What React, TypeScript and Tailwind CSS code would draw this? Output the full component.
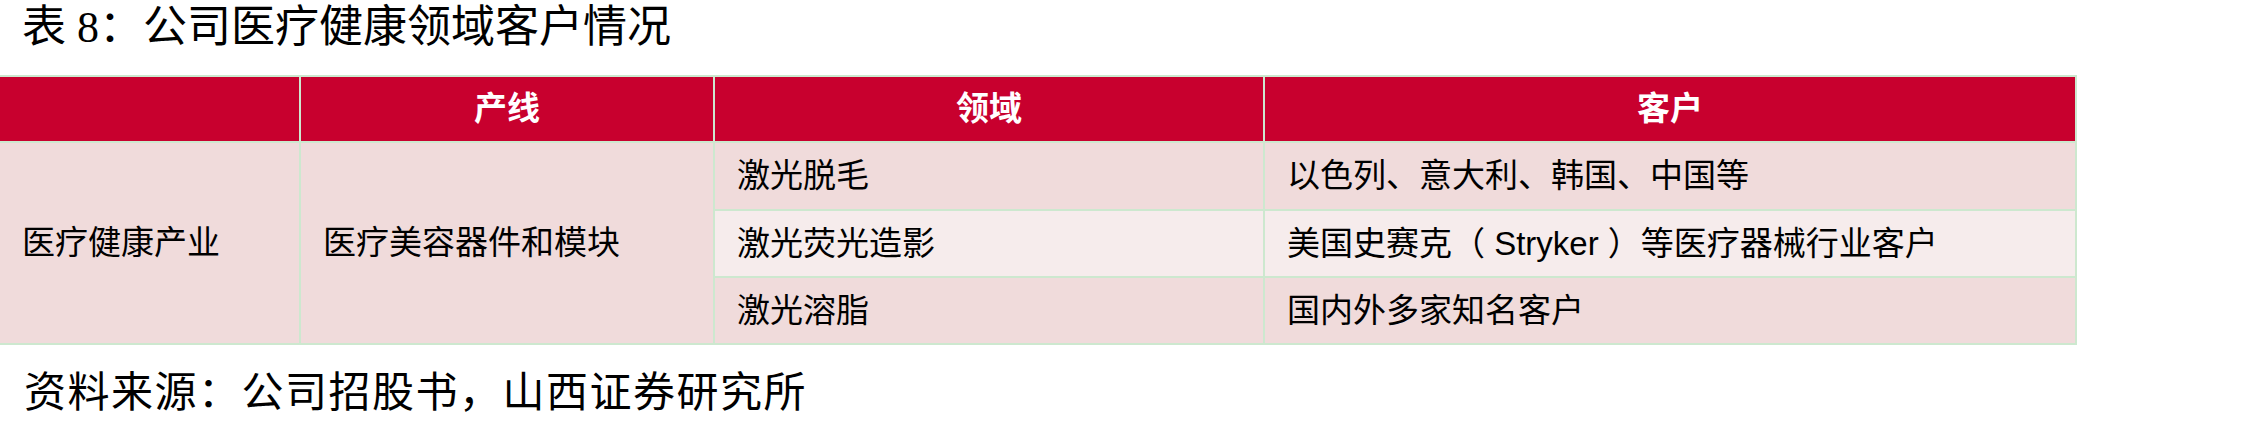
const sans = "font-['Liberation_Sans','Noto_Sans_CJK_SC',sans-serif]"

const rows = [
  { field: '激光脱毛', client: '以色列、意大利、韩国、中国等', light: false },
  { field: '激光荧光造影', client: '美国史赛克（ Stryker ）等医疗器械行业客户', light: true },
  { field: '激光溶脂', client: '国内外多家知名客户', light: false },
]

export default function App() {
  return (
    <div className="h-[430px] w-[2255px] bg-white text-black">
      <div className="flex h-[56px] items-center pl-[22px] font-['Liberation_Serif','Noto_Sans_CJK_SC',serif] text-[44px] leading-none">
        表 8：公司医疗健康领域客户情况
      </div>

      <div className="h-[19px]" />

      {/* table */}
      <div
        className={`grid w-[2077px] grid-cols-[299px_412px_548px_810px] grid-rows-[64px_66px_65px_65px] gap-[2px] bg-[#cde8cf] pt-[2px] pr-[2px] pb-[2px] ${sans}`}
      >
        <div className="bg-[#c8002e]" />
        <div className="flex items-center justify-center bg-[#c8002e] text-[33px] font-bold text-white">
          产线
        </div>
        <div className="flex items-center justify-center bg-[#c8002e] text-[33px] font-bold text-white">
          领域
        </div>
        <div className="flex items-center justify-center bg-[#c8002e] text-[33px] font-bold text-white">
          客户
        </div>

        <div className="row-span-3 flex items-center bg-[#f0dbdb] pl-[22px] text-[33px]">
          医疗健康产业
        </div>
        <div className="row-span-3 flex items-center bg-[#f0dbdb] pl-[22px] text-[33px]">
          医疗美容器件和模块
        </div>

        {rows.map((r) => (
          <div key={r.field} className="contents">
            <div
              className={`flex items-center pl-[22px] text-[33px] ${r.light ? 'bg-[#f6ecec]' : 'bg-[#f0dbdb]'}`}
            >
              {r.field}
            </div>
            <div
              className={`flex items-center whitespace-pre pl-[22px] text-[33px] ${r.light ? 'bg-[#f6ecec]' : 'bg-[#f0dbdb]'}`}
            >
              {r.client}
            </div>
          </div>
        ))}
      </div>

      <div className="flex h-[96px] items-center pl-[24px] font-['Liberation_Sans','Noto_Sans_CJK_SC',sans-serif] text-[42px] leading-none tracking-[1.5px]">
        资料来源：公司招股书，山西证券研究所
      </div>
    </div>
  )
}
